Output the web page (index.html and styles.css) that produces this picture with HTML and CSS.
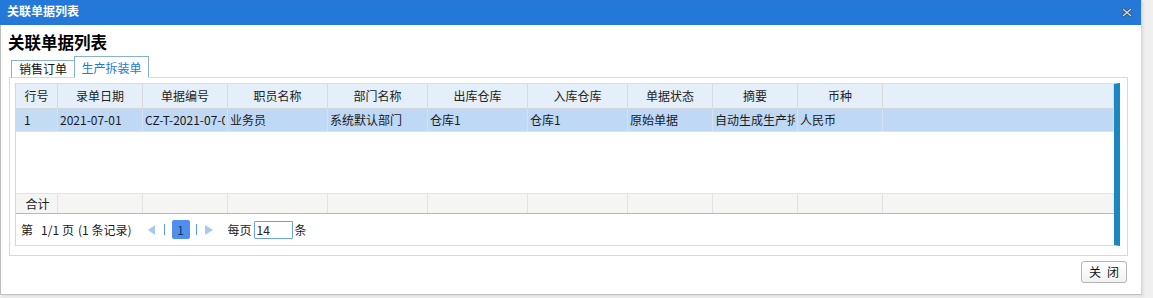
FILE: index.html
```html
<!DOCTYPE html>
<html lang="zh-CN">
<head>
<meta charset="utf-8">
<title>关联单据列表</title>
<link rel="stylesheet" href="styles.css">
</head>
<body>
<div class="win">
  <div class="titlebar">
    <span class="title-text">关联单据列表</span>
    <svg class="close-x" width="10" height="9" viewBox="0 0 10 9">
      <path d="M1.5 1.5 L8.5 7.5 M8.5 1.5 L1.5 7.5" stroke="#3d5273" stroke-width="3" stroke-linecap="square" fill="none"/>
      <path d="M1.5 1.5 L8.5 7.5 M8.5 1.5 L1.5 7.5" stroke="#d3dbe6" stroke-width="1.3" stroke-linecap="square" fill="none"/>
    </svg>
  </div>
  <div class="content">
    <h1 class="heading">关联单据列表</h1>
    <div class="tabs">
      <div class="tab">销售订单</div>
      <div class="tab tab-active">生产拆装单</div>
    </div>
    <div class="panel">
      <div class="grid">
        <div class="row row-head">
          <div class="cell">行号</div>
          <div class="cell">录单日期</div>
          <div class="cell">单据编号</div>
          <div class="cell">职员名称</div>
          <div class="cell">部门名称</div>
          <div class="cell">出库仓库</div>
          <div class="cell">入库仓库</div>
          <div class="cell">单据状态</div>
          <div class="cell">摘要</div>
          <div class="cell">币种</div>
          <div class="cell"></div>
        </div>
        <div class="row row-data">
          <div class="cell cell-num">1</div>
          <div class="cell">2021-07-01</div>
          <div class="cell"><span class="clip">CZ-T-2021-07-01-0001</span></div>
          <div class="cell">业务员</div>
          <div class="cell">系统默认部门</div>
          <div class="cell">仓库1</div>
          <div class="cell">仓库1</div>
          <div class="cell">原始单据</div>
          <div class="cell"><span class="clip">自动生成生产拆装单</span></div>
          <div class="cell">人民币</div>
          <div class="cell"></div>
        </div>
        <div class="grid-empty"></div>
        <div class="row row-foot">
          <div class="cell cell-sum">合计</div>
          <div class="cell"></div>
          <div class="cell"></div>
          <div class="cell"></div>
          <div class="cell"></div>
          <div class="cell"></div>
          <div class="cell"></div>
          <div class="cell"></div>
          <div class="cell"></div>
          <div class="cell"></div>
          <div class="cell"></div>
        </div>
        <div class="pager">
          <span class="pg-info"><span class="pg-w">第</span><span class="pg-n">1/1</span><span class="pg-w pg-page">页</span><span class="pg-rec">(1 条记录)</span></span>
          <span class="pg-arrow pg-left"></span>
          <span class="pg-sep"></span>
          <span class="pg-btn">1</span>
          <span class="pg-sep"></span>
          <span class="pg-arrow pg-right"></span>
          <span class="pg-label">每页</span>
          <span class="pg-input">14</span>
          <span class="pg-unit">条</span>
        </div>
      </div>
    </div>
    <div class="actions">
      <button class="btn-close">关<span class="gap"></span>闭</button>
    </div>
  </div>
</div>
</body>
</html>
```

FILE: styles.css
```css
html, body {
  margin: 0;
  padding: 0;
}
body {
  background: #f0f0f0;
  font-family: "Noto Sans CJK SC", "Microsoft YaHei", sans-serif;
  font-size: 12px;
  color: #222;
  width: 1153px;
  height: 298px;
  overflow: hidden;
}
.win {
  width: 1140px;
  height: 294px;
  background: #fff;
  border-left: 1px solid #bdbdbd;
  border-right: 1px solid #d6d6d6;
  border-bottom: 1px solid #c3c3c3;
  box-shadow: 2px 2px 2px rgba(0,0,0,0.06);
  display: flex;
  flex-direction: column;
}
.titlebar {
  height: 25px;
  background: #2479d8;
  display: flex;
  align-items: center;
  justify-content: space-between;
  padding: 0 9px 0 7px;
  margin-left: -1px;
}
.title-text {
  color: #fff;
  font-weight: bold;
  font-size: 12px;
  line-height: 20px;
  margin-top: -4px;
}
.close-x {
  display: block;
  margin-top: -1px;
}
.content {
  padding: 0 13px 0 7px;
  display: flex;
  flex-direction: column;
}
.heading {
  margin: 6px 0 3px 0;
  font-size: 16.5px;
  line-height: 22px;
  height: 22px;
  font-weight: bold;
  color: #000;
}
.tabs {
  display: flex;
  align-items: flex-end;
  height: 22px;
  margin: 0 0 -1px 3px;
  position: relative;
  z-index: 1;
}
.tab {
  box-sizing: border-box;
  height: 18px;
  width: 64px;
  border: 1px solid #87b3c7;
  border-bottom: 1px solid #d9d9d9;
  background: #fff;
  text-align: center;
  font-size: 12px;
  line-height: 16px;
  color: #111;
}
.tab-active {
  height: 22px;
  width: 75px;
  margin-left: -1px;
  border-bottom-color: #fff;
  color: #2479d8;
  line-height: 20px;
  padding-top: 1px;
}
.panel {
  margin-left: 1px;
  border: 1px solid #d9d9d9;
  padding: 5px 7px 9px 5px;
}
.grid {
  border-left: 1px solid #d6d6d6;
  border-top: 1px solid #dcdcdc;
  border-right: 6px solid #1a87c0;
  border-bottom: 1px solid #dadada;
  display: flex;
  flex-direction: column;
}
.row {
  display: grid;
  grid-template-columns: 42px 85px 85px 100px 100px 100px 100px 85px 85px 85px 1fr;
}
.cell {
  box-sizing: border-box;
  border-right: 1px solid #d8dde3;
  white-space: nowrap;
  overflow: hidden;
  padding: 0 2px;
}
.clip {
  display: block;
  overflow: hidden;
  white-space: nowrap;
}
.row-head {
  height: 25px;
  background: #e5eff9;
  border-bottom: 1px solid #d3d6da;
  box-sizing: border-box;
}
.row-head .cell {
  text-align: center;
  line-height: 24px;
  color: #222;
  border-right-color: #d7dbe0;
}
.row-data {
  height: 23px;
  background: #bed8f5;
  border-bottom: 1px solid #dde3ea;
  box-sizing: border-box;
}
.row-data .cell {
  line-height: 22px;
  color: #1a1a1a;
  border-right-color: #d3e1f1;
}
.row-data .cell-num {
  padding-left: 8px;
  background: #c4dbf4;
}
.grid-empty {
  height: 61px;
  background: #fff;
}
.row-foot {
  height: 21px;
  background: #f5f5f4;
  border-top: 1px solid #dde4ea;
  border-bottom: 1px solid #b8b8b8;
  box-sizing: border-box;
}
.row-foot .cell {
  line-height: 19px;
  border-right-color: #e3e3e3;
}
.row-foot .cell-sum {
  text-align: center;
  padding-left: 4px;
}
.pager {
  height: 31px;
  display: flex;
  align-items: center;
  padding-left: 5px;
  color: #1a1a1a;
  line-height: 16px;
}
.pg-info {
  display: flex;
  align-items: center;
}
.pg-n {
  margin: 0 0 0 8px;
}
.pg-page {
  margin-left: 3px;
}
.pg-rec {
  margin-left: 4px;
}
.pg-arrow {
  width: 0;
  height: 0;
  border-top: 5px solid transparent;
  border-bottom: 5px solid transparent;
}
.pg-left {
  border-right: 7px solid #a9c8f0;
  margin-left: 16px;
}
.pg-right {
  border-left: 8px solid #a9c8f0;
  margin-left: 8px;
}
.pg-sep {
  width: 1px;
  height: 11px;
  background: #5a9af0;
  margin-left: 9px;
}
.pg-btn {
  width: 18px;
  height: 19px;
  border-radius: 2px;
  background: #4f90ef;
  color: #17365f;
  text-align: center;
  line-height: 19px;
  margin-left: 7px;
  margin-right: -1px;
}
.pg-btn + .pg-sep {
  margin-left: 7px;
}
.pg-label {
  margin-left: 15px;
}
.pg-input {
  box-sizing: border-box;
  width: 39px;
  height: 18px;
  border: 1px solid #6aa2e8;
  border-radius: 1px;
  line-height: 15px;
  padding-left: 2px;
  margin-left: 2px;
  color: #222;
}
.pg-unit {
  margin-left: 2px;
}
.actions {
  display: flex;
  justify-content: flex-end;
  padding-top: 5px;
  padding-right: 1px;
}
.btn-close {
  box-sizing: border-box;
  width: 46px;
  height: 22px;
  border: 1px solid #b3b3b3;
  border-radius: 3px;
  background: linear-gradient(#ffffff, #f2f2f2);
  font-family: "Noto Sans CJK SC", sans-serif;
  font-size: 12px;
  color: #111;
  padding: 0;
  line-height: 20px;
  display: flex;
  align-items: center;
  justify-content: center;
}
.gap {
  display: inline-block;
  width: 6px;
}
```
